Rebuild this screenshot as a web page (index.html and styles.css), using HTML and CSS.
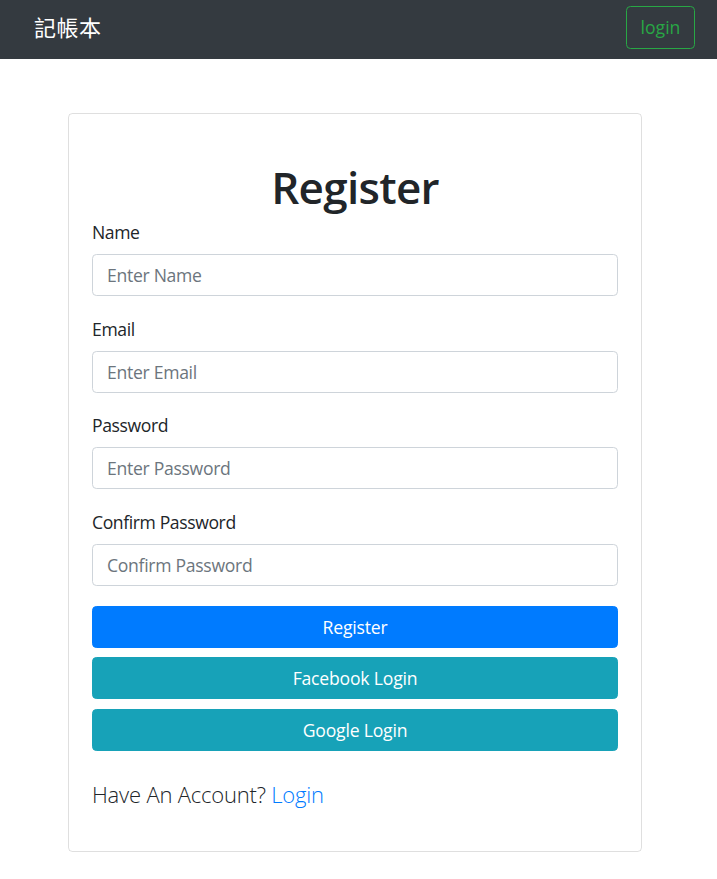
FILE: index.html
```html
<!DOCTYPE html>
<html lang="zh-Hant">
<head>
<meta charset="utf-8">
<title>記帳本</title>
<link rel="stylesheet" href="styles.css">
</head>
<body>
<nav class="navbar">
  <span class="brand">記帳本</span>
  <a class="btn-login" href="#">login</a>
</nav>
<main class="page">
  <div class="card">
    <h1 class="title">Register</h1>
    <form class="form">
      <div class="field">
        <label class="label" for="name">Name</label>
        <input class="input" id="name" type="text" placeholder="Enter Name">
      </div>
      <div class="field">
        <label class="label" for="email">Email</label>
        <input class="input" id="email" type="email" placeholder="Enter Email">
      </div>
      <div class="field">
        <label class="label" for="pw">Password</label>
        <input class="input" id="pw" type="password" placeholder="Enter Password">
      </div>
      <div class="field">
        <label class="label" for="pw2">Confirm Password</label>
        <input class="input" id="pw2" type="password" placeholder="Confirm Password">
      </div>
      <div class="actions">
        <button type="button" class="btn btn-primary">Register</button>
        <button type="button" class="btn btn-info">Facebook Login</button>
        <button type="button" class="btn btn-info">Google Login</button>
      </div>
    </form>
    <p class="lead">Have An Account? <a class="link" href="#">Login</a></p>
  </div>
</main>
</body>
</html>
```

FILE: styles.css
```css
* { box-sizing: border-box; }

html, body {
  margin: 0;
  padding: 0;
  background: #fff;
  color: #212529;
  font-family: "Open Sans", "Noto Sans", "Noto Sans CJK TC", sans-serif;
  font-size: 17.6px;
  line-height: 1.5;
}

.navbar {
  height: 59px;
  background: #343a40;
  display: flex;
  align-items: center;
  justify-content: space-between;
  padding: 0 22px 0 34px;
}

.brand {
  color: #fff;
  font-family: "Noto Sans CJK TC", sans-serif;
  font-size: 22px;
  line-height: 1;
  letter-spacing: 0.5px;
  margin-top: -8px;
}

.btn-login {
  display: flex;
  align-items: center;
  justify-content: center;
  width: 69px;
  height: 43px;
  border: 1px solid #28a745;
  border-radius: 4.4px;
  color: #28a745;
  text-decoration: none;
  font-size: 17.6px;
  margin-top: -5px;
}

.page {
  padding: 54px 0 40px 68px;
}

.card {
  width: 574px;
  height: 739px;
  border: 1px solid rgba(0, 0, 0, 0.125);
  border-radius: 4.4px;
  padding: 47px 23px 0 23px;
}

.title {
  margin: 0 0 5px 0;
  text-align: center;
  font-size: 44px;
  font-weight: 600;
  line-height: 1.2;
  letter-spacing: -0.7px;
}

.form {
  display: flex;
  flex-direction: column;
}

.field {
  display: flex;
  flex-direction: column;
  margin-bottom: 19.5px;
}

.field:last-of-type {
  margin-bottom: 18.5px;
}

.label {
  line-height: 26.4px;
  margin-bottom: 8.8px;
  letter-spacing: -0.4px;
}

.input {
  height: 42px;
  border: 1px solid #ced4da;
  border-radius: 4.4px;
  padding: 0 14px;
  font-family: inherit;
  font-size: 17.6px;
  color: #495057;
  letter-spacing: -0.3px;
}

.input::placeholder {
  color: #6c757d;
  opacity: 1;
}

.actions {
  display: flex;
  flex-direction: column;
  gap: 9.5px;
}

.btn {
  height: 42px;
  border: 1px solid transparent;
  border-radius: 4.4px;
  color: #fff;
  font-family: inherit;
  font-size: 17.6px;
  letter-spacing: -0.2px;
  cursor: pointer;
}

.btn-primary {
  background: #007bff;
  border-color: #007bff;
}

.btn-info {
  background: #17a2b8;
  border-color: #17a2b8;
}

.lead {
  margin: 27px 0 0 0;
  font-size: 22px;
  font-weight: 300;
  line-height: 1.5;
  letter-spacing: -0.2px;
}

.link {
  color: #007bff;
  text-decoration: none;
}
```
